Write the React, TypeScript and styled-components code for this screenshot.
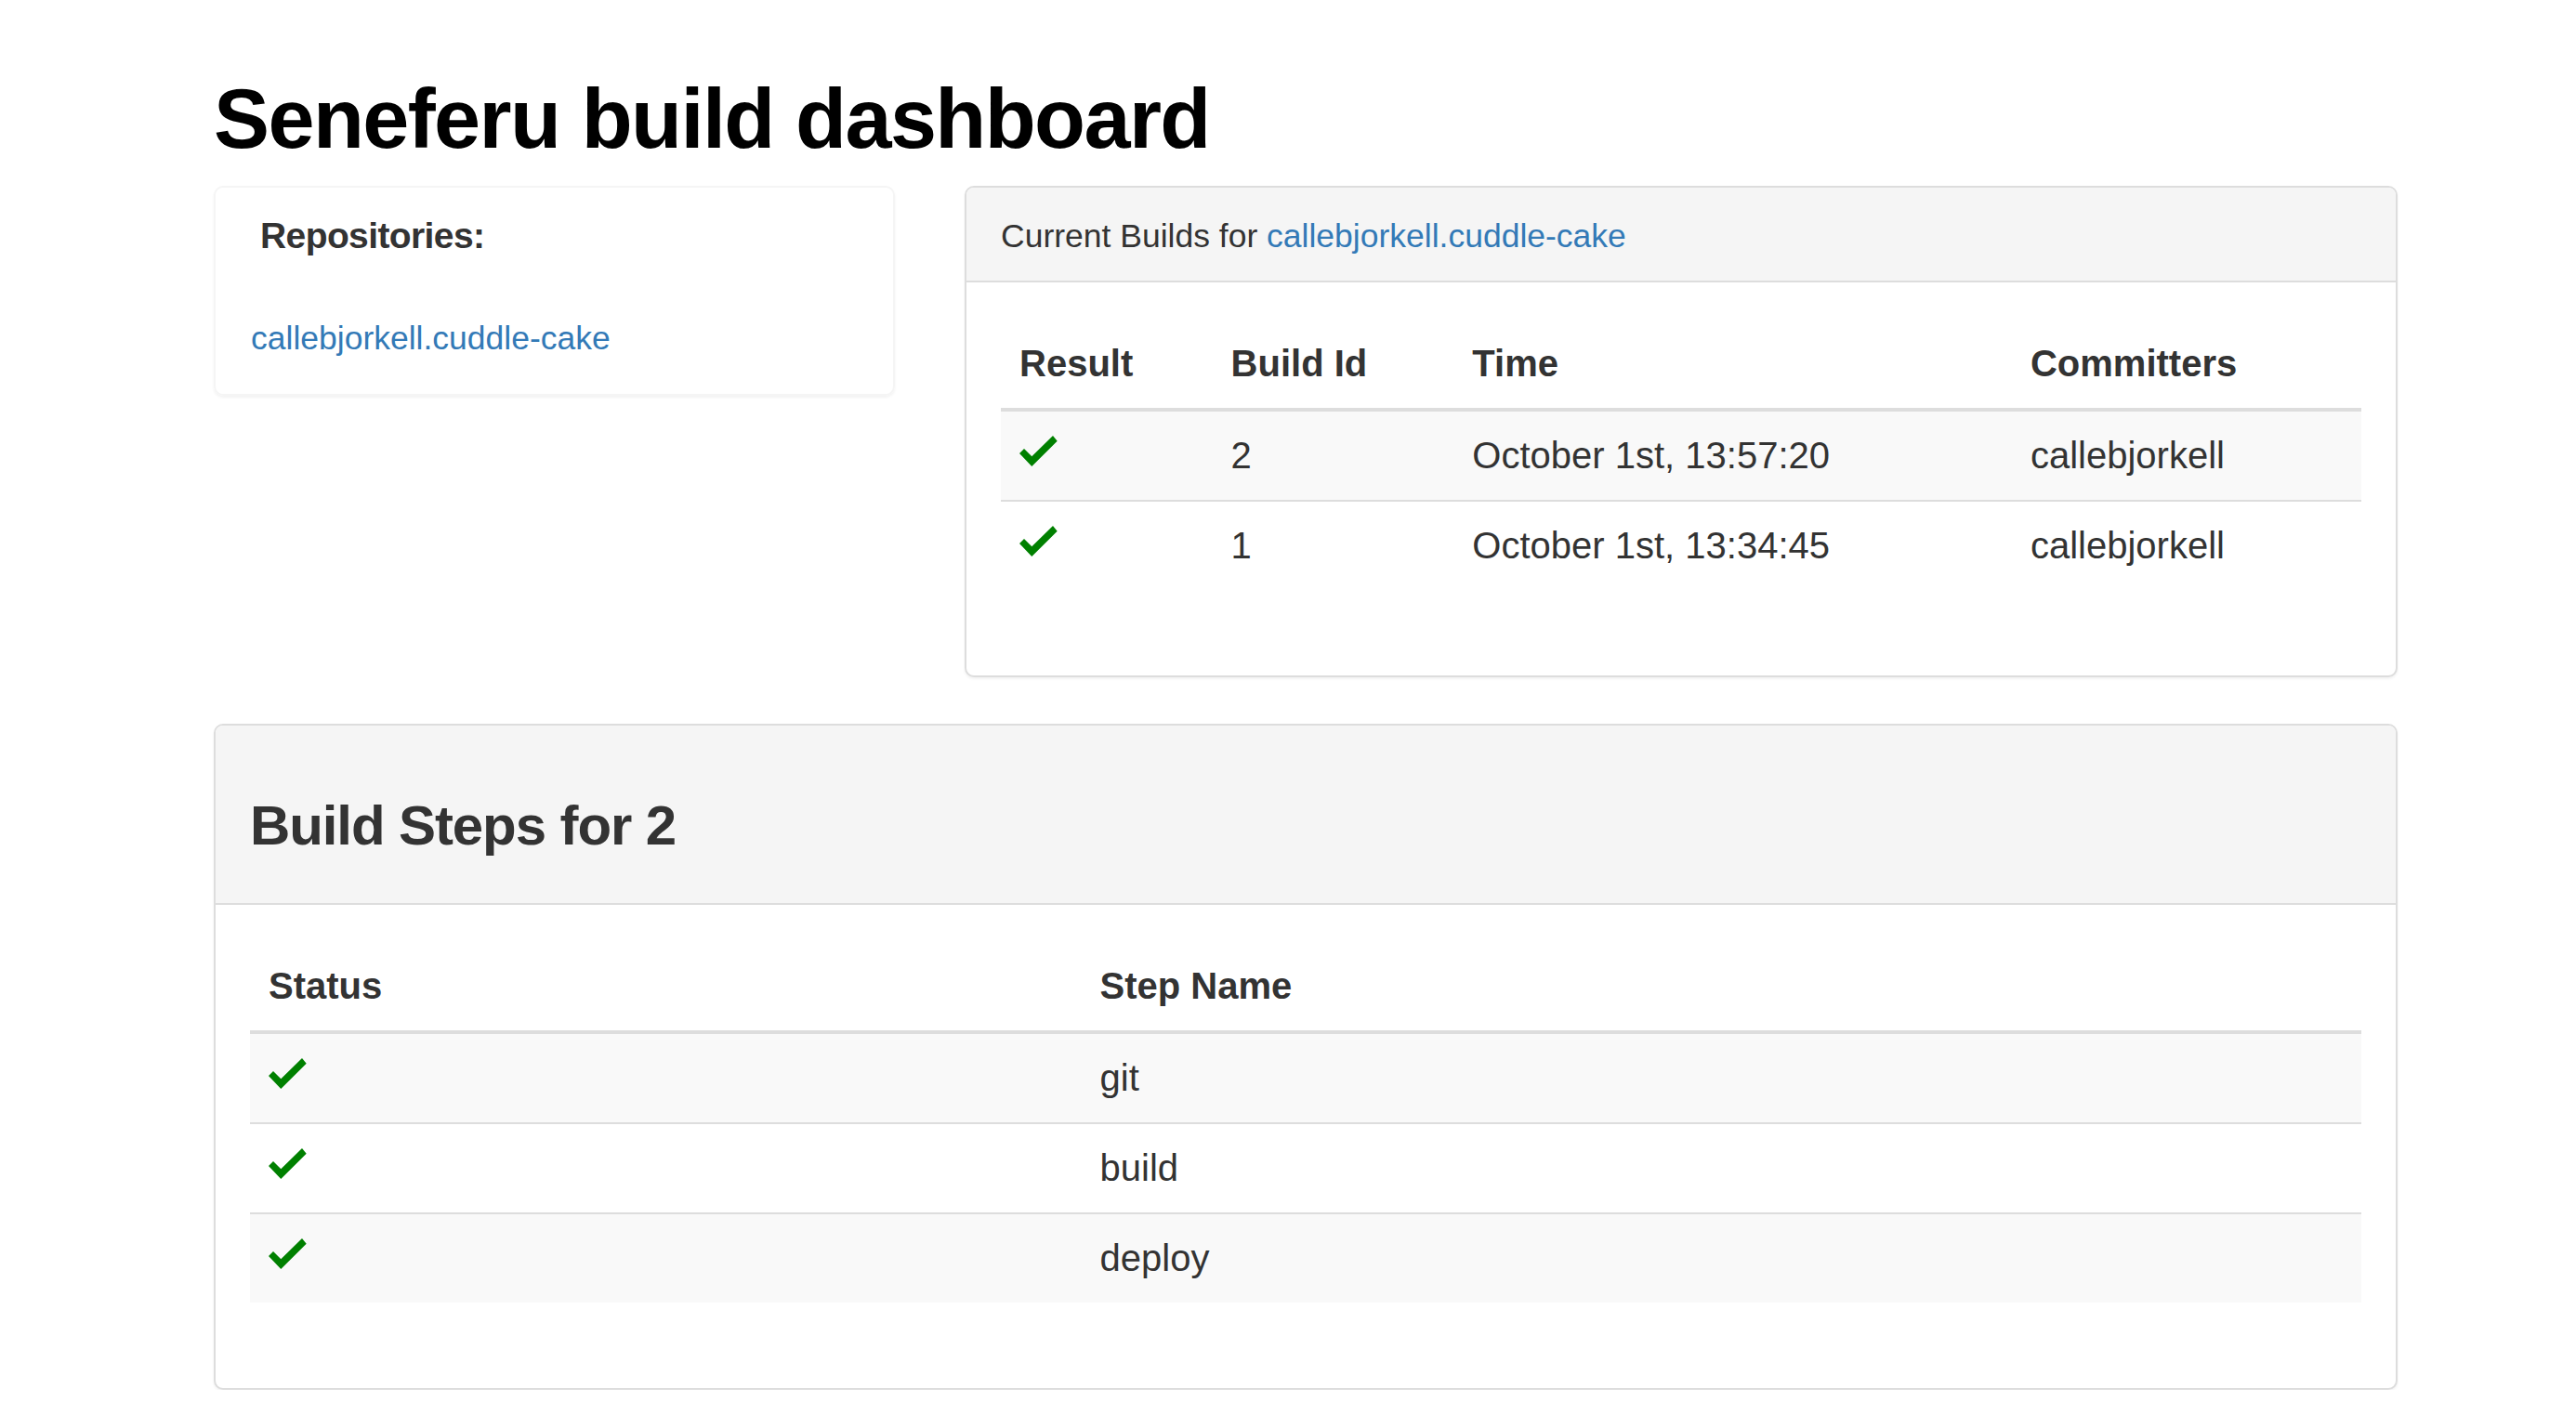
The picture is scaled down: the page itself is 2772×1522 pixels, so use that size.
import React from "react";
import styled, { createGlobalStyle } from "styled-components";

const GlobalStyle = createGlobalStyle`
  html, body {
    margin: 0;
    padding: 0;
    background: #fff;
  }
  body {
    font-family: "Liberation Sans", Arial, sans-serif;
    color: #333;
  }
  * {
    box-sizing: border-box;
  }
`;

const Page = styled.div`
  width: 2350px;
  margin-left: 230px;
`;

const Title = styled.h1`
  margin: 79px 0 22px;
  font-size: 90px;
  line-height: 99px;
  font-weight: bold;
  letter-spacing: -1.6px;
  color: #000;
`;

const TopRow = styled.div`
  display: grid;
  grid-template-columns: 733px 1fr;
  column-gap: 75px;
  align-items: start;
  margin-bottom: 50px;
`;

const RepoPanel = styled.aside`
  border: 2px solid #f5f5f5;
  border-radius: 10px;
  box-shadow: 0 2px 3px rgba(0, 0, 0, 0.05);
  padding: 30px 38px 35px 38px;
`;

const RepoTitle = styled.h4`
  margin: 0 0 64px;
  padding-left: 10px;
  font-size: 39px;
  line-height: 43px;
  font-weight: bold;
  letter-spacing: -0.6px;
  color: #333;
`;

const RepoLink = styled.a`
  display: block;
  font-size: 35.5px;
  line-height: 50px;
  color: #337ab7;
  text-decoration: none;
`;

const Panel = styled.section`
  border: 2px solid #ddd;
  border-radius: 10px;
  box-shadow: 0 2px 3px rgba(0, 0, 0, 0.05);
  background: #fff;
  overflow: hidden;
`;

const PanelHeading = styled.div`
  background: #f5f5f5;
  border-bottom: 2px solid #ddd;
  padding: 27px 37px 23px;
  font-size: 35.5px;
  line-height: 50px;
  color: #333;

  a {
    color: #337ab7;
    text-decoration: none;
  }
`;

const StepsTitle = styled.h3`
  margin: 48px 0 27px;
  font-size: 60px;
  line-height: 66px;
  font-weight: bold;
  letter-spacing: -1.1px;
  color: #333;
`;

const PanelBody = styled.div`
  padding: 40px 37px 42px;
`;

const Table = styled.table`
  width: 100%;
  border-collapse: collapse;
  border-spacing: 0;
  margin-bottom: 50px;
  font-size: 40px;
  line-height: 55px;
`;

const HeadCell = styled.th<{ $width: number }>`
  width: ${(p) => p.$width}px;
  padding: 20px;
  text-align: left;
  vertical-align: bottom;
  font-weight: bold;
  border-bottom: 4px solid #ddd;
`;

const Row = styled.tr<{ $striped: boolean }>`
  background: ${(p) => (p.$striped ? "#f9f9f9" : "#fff")};
`;

const Cell = styled.td`
  padding: 20px;
  vertical-align: top;
  border-top: 2px solid #ddd;
`;

const CheckIcon = styled.svg`
  display: inline-block;
  vertical-align: 2px;
`;

const Check = () => (
  <CheckIcon width="41" height="33" viewBox="0 0 41 33">
    <polygon
      points="0,19 5,14 13.3,22.3 36,0 40.7,5.7 13.3,33"
      fill="#008000"
    />
  </CheckIcon>
);

const repo = "callebjorkell.cuddle-cake";

const builds = [
  { id: 2, time: "October 1st, 13:57:20", committer: "callebjorkell" },
  { id: 1, time: "October 1st, 13:34:45", committer: "callebjorkell" },
];

const steps = ["git", "build", "deploy"];

export default function App() {
  return (
    <>
      <GlobalStyle />
      <Page>
        <Title>Seneferu build dashboard</Title>
        <TopRow>
          <RepoPanel>
            <RepoTitle>Repositories:</RepoTitle>
            <RepoLink href="#">{repo}</RepoLink>
          </RepoPanel>
          <Panel>
            <PanelHeading>
              Current Builds for <a href="#">{repo}</a>
            </PanelHeading>
            <PanelBody>
              <Table>
                <thead>
                  <tr>
                    <HeadCell $width={227}>Result</HeadCell>
                    <HeadCell $width={259}>Build Id</HeadCell>
                    <HeadCell $width={599}>Time</HeadCell>
                    <HeadCell $width={375}>Committers</HeadCell>
                  </tr>
                </thead>
                <tbody>
                  {builds.map((build, i) => (
                    <Row key={build.id} $striped={i % 2 === 0}>
                      <Cell>
                        <Check />
                      </Cell>
                      <Cell>{build.id}</Cell>
                      <Cell>{build.time}</Cell>
                      <Cell>{build.committer}</Cell>
                    </Row>
                  ))}
                </tbody>
              </Table>
            </PanelBody>
          </Panel>
        </TopRow>
        <Panel>
          <PanelHeading>
            <StepsTitle>Build Steps for 2</StepsTitle>
          </PanelHeading>
          <PanelBody>
            <Table>
              <thead>
                <tr>
                  <HeadCell $width={893}>Status</HeadCell>
                  <HeadCell $width={1375}>Step Name</HeadCell>
                </tr>
              </thead>
              <tbody>
                {steps.map((step, i) => (
                  <Row key={step} $striped={i % 2 === 0}>
                    <Cell>
                      <Check />
                    </Cell>
                    <Cell>{step}</Cell>
                  </Row>
                ))}
              </tbody>
            </Table>
          </PanelBody>
        </Panel>
      </Page>
    </>
  );
}
